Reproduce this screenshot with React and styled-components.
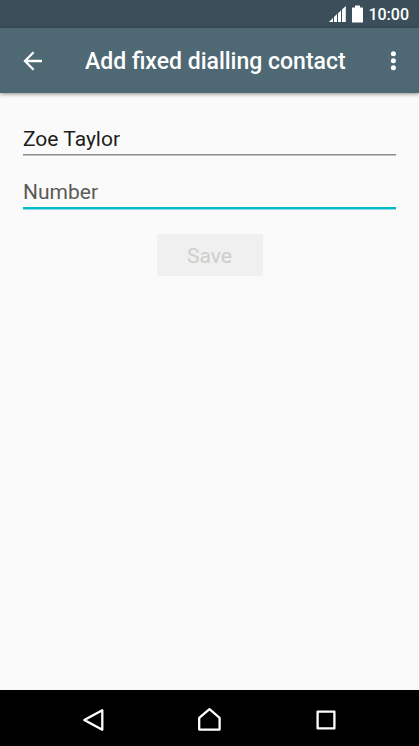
import React, { useState } from 'react';
import styled, { createGlobalStyle } from 'styled-components';

const GlobalStyle = createGlobalStyle`
    * {
        box-sizing: border-box;
    }

    body {
        margin: 0;
        background: #fafafa;
        font-family: Roboto, 'Liberation Sans', sans-serif;
    }
`;

const Screen = styled.div`
    display: flex;
    flex-direction: column;
    min-height: 100vh;
`;

const StatusBar = styled.div`
    display: flex;
    align-items: center;
    justify-content: flex-end;
    gap: 5px;
    height: 28px;
    padding-right: 10px;
    background: #3a4f59;
    color: #fff;
`;

const Clock = styled.span`
    padding-top: 2px;
    font-size: 16px;
    line-height: 26px;
    font-weight: 500;
`;

const Toolbar = styled.header`
    display: flex;
    align-items: center;
    justify-content: space-between;
    height: 65px;
    padding: 0 12px 0 13px;
    background: #4e6874;
    box-shadow: 0 1px 4px rgba(0, 0, 0, 0.45);
    color: #fff;
`;

const Title = styled.h1`
    flex: 1;
    margin: 0;
    padding: 2px 0 0 32px;
    font-size: 23px;
    line-height: 32px;
    font-weight: 500;
    white-space: nowrap;
`;

const IconButton = styled.button`
    display: flex;
    align-items: center;
    justify-content: center;
    width: ${props => props.$width || '40px'};
    height: 40px;
    padding: 0;
    border: none;
    background: none;
    color: #fff;
    cursor: pointer;
`;

const Form = styled.form`
    flex: 1;
    display: flex;
    flex-direction: column;
    padding: 31px 23px;
`;

const Input = styled.input`
    display: block;
    width: 100%;
    height: ${props => props.$active ? '32px' : '31px'};
    margin-bottom: ${props => props.$active ? '25px' : '22px'};
    padding: 0;
    border: none;
    border-bottom: ${props => props.$active ? '2px solid #00bcc8' : '1px solid #8c8c88'};
    border-radius: 0;
    box-shadow: 0 1px 0 ${props => props.$active ? '#8fdde2' : '#c4c4c0'};
    background: none;
    color: #1e1e1c;
    font-family: inherit;
    font-size: 21px;

    &::placeholder {
        color: #5a5a56;
        opacity: 1;
    }

    &:focus {
        outline: none;
    }
`;

const SaveButton = styled.button`
    align-self: center;
    width: 106px;
    height: 42px;
    padding: 2px 0 0;
    border: none;
    border-radius: 2px;
    background: #f0f0f0;
    color: #cececc;
    font-family: inherit;
    font-size: 21px;
`;

const NavBar = styled.nav`
    display: grid;
    grid-template-columns: repeat(3, 1fr);
    align-items: center;
    justify-items: center;
    height: 56px;
    padding: 4px 35px 0;
    background: #000;
`;

const SignalIcon = () => (
    <svg width='18' height='18' viewBox='0 0 18 18' fill='#fff' aria-hidden='true'>
        <path d='M0 17 L4 13 V17Z' />
        <path d='M5 12 L8 9 V17 H5Z' />
        <path d='M9 8.2 L12 5.5 V17 H9Z' />
        <path d='M13 4.4 L16.8 1 V17 H13Z' />
    </svg>
);

const BatteryIcon = () => (
    <svg width='11' height='18' viewBox='0 0 11 18' fill='#fff' aria-hidden='true'>
        <path d='M3 0.5 H8 V2.5 H10.5 Q11 2.5 11 3 V17 Q11 17.5 10.5 17.5 H0.5 Q0 17.5 0 17 V3 Q0 2.5 0.5 2.5 H3Z' />
    </svg>
);

const ArrowIcon = () => (
    <svg width='20' height='20' viewBox='0 0 20 20' fill='none' stroke='currentColor' strokeWidth='2.3' aria-hidden='true'>
        <path d='M19 10 H2.4 M10.6 1.3 L2 10 L10.6 18.7' />
    </svg>
);

const MoreIcon = () => (
    <svg width='6' height='20' viewBox='0 0 6 20' fill='currentColor' aria-hidden='true'>
        <circle cx='3.4' cy='2.8' r='2.5' />
        <circle cx='3.4' cy='9.8' r='2.5' />
        <circle cx='3.4' cy='16.8' r='2.5' />
    </svg>
);

const NavIcon = ({ d }) => (
    <svg width='24' height='24' viewBox='0 0 24 24' fill='none' stroke='currentColor' strokeWidth='2.3' strokeLinejoin='round' aria-hidden='true'>
        <path d={d} />
    </svg>
);

const App = () => {
    const [name, setName] = useState('Zoe Taylor');
    const [number, setNumber] = useState('');

    return (
        <Screen>
            <GlobalStyle />
            <StatusBar>
                <SignalIcon />
                <BatteryIcon />
                <Clock>10:00</Clock>
            </StatusBar>
            <Toolbar>
                <IconButton type='button' aria-label='Back'>
                    <ArrowIcon />
                </IconButton>
                <Title>Add fixed dialling contact</Title>
                <IconButton type='button' aria-label='More options' $width='28px'>
                    <MoreIcon />
                </IconButton>
            </Toolbar>
            <Form onSubmit={e => e.preventDefault()}>
                <Input
                    type='text'
                    aria-label='Name'
                    value={name}
                    onChange={e => setName(e.target.value)}
                />
                <Input
                    $active
                    type='tel'
                    aria-label='Number'
                    placeholder='Number'
                    value={number}
                    onChange={e => setNumber(e.target.value)}
                />
                <SaveButton type='submit' disabled={!name || !number}>Save</SaveButton>
            </Form>
            <NavBar>
                <IconButton type='button' aria-label='Back'>
                    <NavIcon d='M21.3 2.2 V21.8 L3.3 12Z' />
                </IconButton>
                <IconButton type='button' aria-label='Home'>
                    <NavIcon d='M2.2 21.6 V9.8 L12.5 1.2 L22.6 9.8 V21.6Z' />
                </IconButton>
                <IconButton type='button' aria-label='Recent apps'>
                    <NavIcon d='M3.6 3.6 H20.4 V20.4 H3.6Z' />
                </IconButton>
            </NavBar>
        </Screen>
    );
};

export default App;
